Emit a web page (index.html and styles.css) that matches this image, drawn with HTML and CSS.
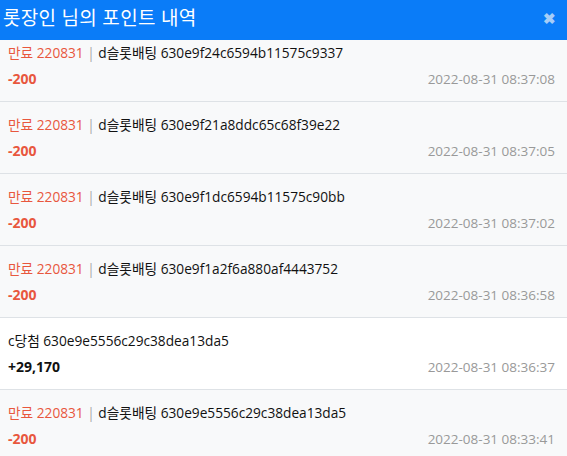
FILE: index.html
```html
<!DOCTYPE html>
<html>
<head>
<title>포인트 내역</title>
<link rel="stylesheet" href="styles.css">
</head>
<body>

  <div id="modal-header">
    <h1 id="modal-title">롯장인 님의 포인트 내역</h1>
    <span id="close-button">&#x2716;</span>
  </div>

  <div id="point-list">
    <div class="point-row expired">
      <div class="point-desc"><span class="expire">만료 220831</span> <span class="bar">|</span> d슬롯배팅 630e9f24c6594b11575c9337</div>
      <div class="point-bottom">
        <span class="amount minus">-200</span>
        <span class="date">2022-08-31 08:37:08</span>
      </div>
    </div>
    <div class="point-row expired">
      <div class="point-desc"><span class="expire">만료 220831</span> <span class="bar">|</span> d슬롯배팅 630e9f21a8ddc65c68f39e22</div>
      <div class="point-bottom">
        <span class="amount minus">-200</span>
        <span class="date">2022-08-31 08:37:05</span>
      </div>
    </div>
    <div class="point-row expired">
      <div class="point-desc"><span class="expire">만료 220831</span> <span class="bar">|</span> d슬롯배팅 630e9f1dc6594b11575c90bb</div>
      <div class="point-bottom">
        <span class="amount minus">-200</span>
        <span class="date">2022-08-31 08:37:02</span>
      </div>
    </div>
    <div class="point-row expired">
      <div class="point-desc"><span class="expire">만료 220831</span> <span class="bar">|</span> d슬롯배팅 630e9f1a2f6a880af4443752</div>
      <div class="point-bottom">
        <span class="amount minus">-200</span>
        <span class="date">2022-08-31 08:36:58</span>
      </div>
    </div>
    <div class="point-row">
      <div class="point-desc">c당첨 630e9e5556c29c38dea13da5</div>
      <div class="point-bottom">
        <span class="amount">+29,170</span>
        <span class="date">2022-08-31 08:36:37</span>
      </div>
    </div>
    <div class="point-row expired">
      <div class="point-desc"><span class="expire">만료 220831</span> <span class="bar">|</span> d슬롯배팅 630e9e5556c29c38dea13da5</div>
      <div class="point-bottom">
        <span class="amount minus">-200</span>
        <span class="date">2022-08-31 08:33:41</span>
      </div>
    </div>
  </div>

</body>
</html>
```

FILE: styles.css
```css
body {
  font-family: "Open Sans", "Noto Sans CJK KR", sans-serif;
  margin: 0;
  padding: 0;
  background-color: white;
  color: #212529;
}
/* header stays on top, list is scrolled a bit under it */
#modal-header {
  position: fixed;
  top: 0;
  left: 0;
  right: 0;
  height: 40px;
  background-color: #0a7cf8;
  display: flex;
  align-items: center;
  justify-content: space-between;
  padding: 0 11px 0 3px;
  z-index: 10;
}
#modal-title {
  margin: 0;
  margin-top: -6px;
  color: white;
  font-size: 19px;
  font-weight: normal;
  letter-spacing: 0.3px;
}
#close-button {
  color: #a6cdf7;
  font-size: 15px;
  font-weight: bold;
  margin-top: -5px;
}
#point-list {
  padding-top: 30px;
}
.point-row {
  padding: 13px 12px 12px 8px;
  border-bottom: 1px solid #dee2e6;
  background-color: white;
  font-size: 13.7px;
}
.point-row.expired {
  background-color: #f8f9fa;
}
.point-desc {
  line-height: 20px;
  color: #111;
}
.expire {
  color: #e8573e;
}
.bar {
  color: #aaa;
}
.point-bottom {
  display: flex;
  justify-content: space-between;
  align-items: center;
  margin-top: 6px;
  line-height: 20px;
}
.amount {
  font-weight: bold;
  font-size: 14px;
  color: #111;
}
.amount.minus {
  color: #e8573e;
}
.date {
  color: #999;
  font-size: 13.5px;
}
```
